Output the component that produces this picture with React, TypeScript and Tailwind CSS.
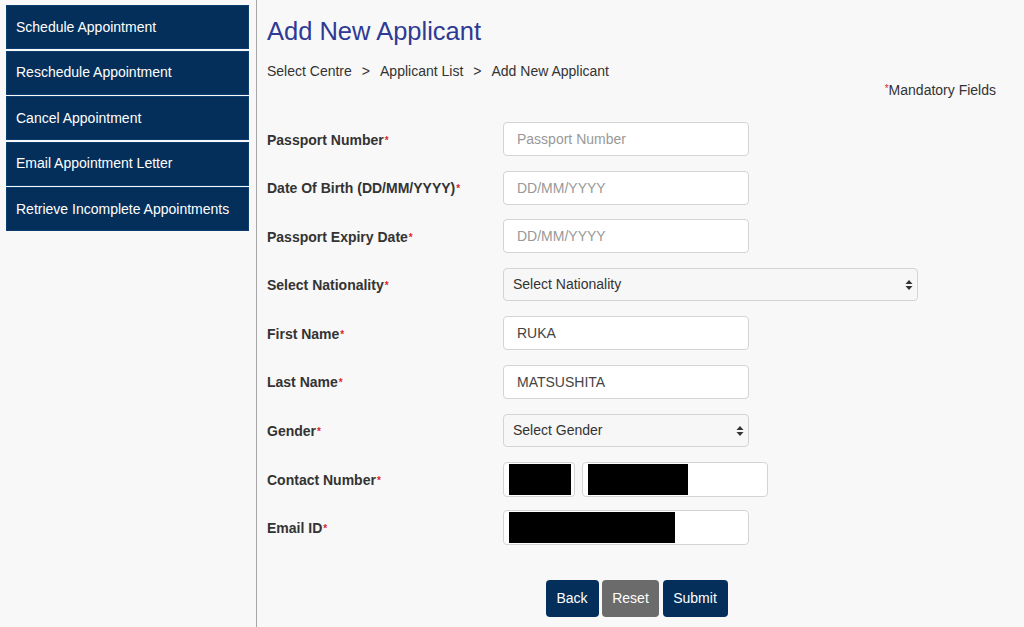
const menu = [
  'Schedule Appointment',
  'Reschedule Appointment',
  'Cancel Appointment',
  'Email Appointment Letter',
  'Retrieve Incomplete Appointments',
];

function Label({ text }: { text: string }) {
  return (
    <label className="w-[236px] shrink-0 pt-[2px] text-[14px] font-bold text-[#333]">
      {text}
      <sup className="relative top-[-1px] ml-[1px] text-[10px] text-[#e0252b]">*</sup>
    </label>
  );
}

function TextInput({ placeholder, value, width = 'w-[246px]' }: { placeholder?: string; value?: string; width?: string }) {
  return (
    <input
      type="text"
      placeholder={placeholder}
      defaultValue={value}
      className={`${width} h-[34px] rounded-[4px] border border-[#d4d4d4] bg-white px-[13px] text-[14px] text-[#444] placeholder:text-[#999] outline-none`}
    />
  );
}

function SelectBox({ text, width }: { text: string; width: string }) {
  return (
    <div className={`${width} flex h-[33px] items-center justify-between rounded-[4px] border border-[#d4d4d4] bg-[#f7f7f7] pl-[9px] pr-[4px] text-[14px] text-[#333]`}>
      <span>{text}</span>
      <svg width="8" height="12" viewBox="0 0 8 12">
        <path d="M4 1 L7.5 5 H0.5 Z" fill="#333" />
        <path d="M4 11 L7.5 7 H0.5 Z" fill="#333" />
      </svg>
    </div>
  );
}

function Redacted({ width, box, black }: { width: string; box?: string; black: string }) {
  return (
    <div className={`${width} ${box ?? 'h-[35px]'} flex items-center rounded-[4px] border border-[#d4d4d4] bg-white pl-[5px]`}>
      <div className={`${black} h-[31px] bg-black`} />
    </div>
  );
}

export default function App() {
  return (
    <div className="flex h-[627px] w-[1024px] overflow-hidden bg-[#f8f8f8] font-['Liberation_Sans',Arial,sans-serif]">
      <aside className="flex h-full w-[257px] shrink-0 flex-col gap-[1.5px] border-r border-[#a6a6a6] pl-[6px] pr-[7px] pt-[5px]">
        {menu.map((m) => (
          <div key={m} className="flex h-[44px] items-center bg-[#052f5b] px-[10px] text-[14px] text-white shadow-[inset_0_0_0_1px_#0b3d70]">
            {m}
          </div>
        ))}
      </aside>

      <main className="flex-1 pl-[10px] pr-[28px]">
        <h1 className="mt-[15px] h-[32px] text-[25.5px] leading-[32px] text-[#2e3a94]">Add New Applicant</h1>
        <div className="mt-[14px] flex h-[20px] items-center gap-[10px] text-[14px] text-[#333]">
          <span>Select Centre</span>
          <span>&gt;</span>
          <span>Applicant List</span>
          <span>&gt;</span>
          <span>Add New Applicant</span>
        </div>
        <div className="flex h-[19px] items-center justify-end text-[14px] text-[#333]">
          <sup className="relative top-[-2px] text-[10px] text-[#e0252b]">*</sup>Mandatory Fields
        </div>

        <form className="mt-[22px] flex flex-col gap-[14.6px]">
          <div className="flex h-[34px] items-center">
            <Label text="Passport Number" />
            <TextInput placeholder="Passport Number" />
          </div>
          <div className="flex h-[34px] items-center">
            <Label text="Date Of Birth (DD/MM/YYYY)" />
            <TextInput placeholder="DD/MM/YYYY" />
          </div>
          <div className="flex h-[34px] items-center">
            <Label text="Passport Expiry Date" />
            <TextInput placeholder="DD/MM/YYYY" />
          </div>
          <div className="flex h-[34px] items-center">
            <Label text="Select Nationality" />
            <SelectBox text="Select Nationality" width="w-[415px]" />
          </div>
          <div className="flex h-[34px] items-center">
            <Label text="First Name" />
            <TextInput value="RUKA" />
          </div>
          <div className="flex h-[34px] items-center">
            <Label text="Last Name" />
            <TextInput value="MATSUSHITA" />
          </div>
          <div className="flex h-[34px] items-center">
            <Label text="Gender" />
            <SelectBox text="Select Gender" width="w-[246px]" />
          </div>
          <div className="flex h-[34px] items-center">
            <Label text="Contact Number" />
            <div className="flex gap-[7px]">
              <Redacted width="w-[72px]" black="w-[62px]" />
              <Redacted width="w-[186px]" black="w-[100px]" box="h-[35px] pl-[4px]" />
            </div>
          </div>
          <div className="flex h-[34px] items-center">
            <Label text="Email ID" />
            <Redacted width="w-[246px]" black="w-[166px]" />
          </div>
        </form>

        <div className="mt-[35px] flex justify-center gap-[3.5px] pl-[10px] text-[14px] text-white">
          <button className="h-[37px] w-[53px] rounded-[4px] bg-[#052f5b]">Back</button>
          <button className="h-[37px] w-[57px] rounded-[4px] bg-[#6b6b6b]">Reset</button>
          <button className="h-[37px] w-[65px] rounded-[4px] bg-[#052f5b]">Submit</button>
        </div>
      </main>
    </div>
  );
}
